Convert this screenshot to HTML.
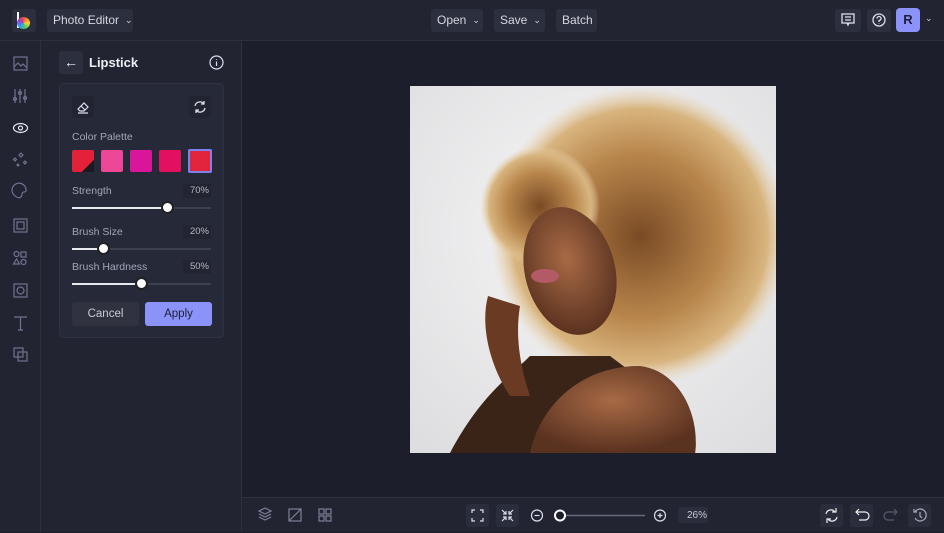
<!DOCTYPE html>
<html><head><style>
*{box-sizing:border-box;margin:0;padding:0}
body{width:944px;height:532px;background:#1c1e2b;font-family:"Liberation Sans",sans-serif;color:#d8dae4;position:relative;overflow:hidden;font-size:12px}
.top{position:absolute;left:0;top:0;width:944px;height:41px;background:#222432;border-bottom:1px solid #2e3040}
.btn{position:absolute;top:9px;height:23px;background:#2c2f3e;border-radius:3px;color:#d4d6e0;font-size:12px;line-height:23px;padding:0 6px;white-space:nowrap}
.btn i{font-style:normal;font-size:9px;margin-left:6px;position:relative;top:-1px}
.side{position:absolute;left:0;top:41px;width:41px;height:491px;background:#222432;border-right:1px solid #2e3040}
.panel{position:absolute;left:41px;top:41px;width:201px;height:491px;background:#222432;border-right:1px solid #2e3040}
.card{position:absolute;left:18px;top:42px;width:165px;height:255px;border:1px solid #2f3242;border-radius:5px;background:#262938}
.lbl{position:absolute;left:12px;color:#a3a6b8;font-size:10.5px}
.val{position:absolute;right:12px;width:28px;height:14px;background:#222432;border-radius:2px;color:#b6b8c6;font-size:9.5px;text-align:right;padding-right:2px;line-height:14px}
.track{position:absolute;left:12px;width:139px;height:2px;background:#3d4050}
.fill{position:absolute;left:0;top:0;height:2px;background:#e8e9ef}
.knob{position:absolute;top:-6px;width:13px;height:13px;border-radius:50%;background:#fff;border:2px solid #222}
.sw{position:absolute;top:66px;width:22px;height:22px;border-radius:2px}
.bot{position:absolute;left:242px;top:497px;width:702px;height:35px;background:#222432;border-top:1px solid #2e3040}
.ib{position:absolute;width:22px;height:22px;border-radius:3px;background:#2a2d3c}
svg.ic{position:absolute}
</style></head><body>
<div class="top">
 <div style="position:absolute;left:12px;top:9px;width:24px;height:23px;background:#2c2f3e;border-radius:3px"></div>
 <div style="position:absolute;left:17px;top:12px;width:2px;height:16px;background:#fff"></div>
 <div style="position:absolute;left:17px;top:17px;width:13px;height:12px;border-radius:50%;background:conic-gradient(#e53 0,#fc3 25%,#4c6 45%,#39f 65%,#a3c 85%,#e53)"></div>
 <div class="btn" style="left:47px;width:86px">Photo Editor<i>&#8964;</i></div>
 <div class="btn" style="left:431px;width:52px">Open<i>&#8964;</i></div>
 <div class="btn" style="left:494px;width:51px">Save<i>&#8964;</i></div>
 <div class="btn" style="left:556px;width:41px">Batch</div>
 <div class="btn" style="left:835px;width:26px"></div>
 <svg class="ic" style="left:841px;top:13px" width="14" height="14" viewBox="0 0 14 14" fill="none" stroke="#dde" stroke-width="1.3"><rect x="1" y="1" width="12" height="9"/><path d="M4 4h6M4 7h6M6 10l1 2 1-2"/></svg>
 <div class="btn" style="left:867px;width:24px"></div>
 <svg class="ic" style="left:872px;top:13px" width="14" height="14" viewBox="0 0 14 14" fill="none" stroke="#dde" stroke-width="1.3"><circle cx="7" cy="7" r="6"/><path d="M5 5.5a2 2 0 1 1 2 2v1.5M7 10.5v.5"/></svg>
 <div style="position:absolute;left:896px;top:8px;width:24px;height:24px;border-radius:4px;background:#8b93f8;color:#1c1e3a;font-weight:bold;font-size:13px;text-align:center;line-height:24px">R</div>
 <div style="position:absolute;left:925px;top:13px;color:#ccd;font-size:9px">&#8964;</div>
</div>
<div class="side">
 <svg width="41" height="330" viewBox="0 0 41 330" fill="none" stroke="#6f7390" stroke-width="1.2" style="position:absolute;left:0;top:0">
  <rect x="14" y="16" width="13" height="13"/><path d="M14 26l4-4 3 3 2-2 4 4"/>
  <path d="M15 48v14M20 48v14M25 48v14"/><circle cx="15" cy="58" r="1.5"/><circle cx="20" cy="52" r="1.5"/><circle cx="25" cy="57" r="1.5"/>
  <ellipse cx="20.5" cy="87" rx="7" ry="4.5" stroke="#e8e9f0"/><circle cx="20.5" cy="87" r="2" stroke="#e8e9f0"/>
  <path d="M21 112l2 2-2 2-2-2zM15 117l1.5 1.5-1.5 1.5-1.5-1.5zM25 120l1.5 1.5-1.5 1.5-1.5-1.5zM18 123l1 1-1 1-1-1z"/>
  <path d="M14 154a7 7 0 1 1 12-4c-1 2-4 0-4 3s-3 6-8 1z"/>
  <rect x="14" y="178" width="13" height="13"/><rect x="17" y="181" width="7" height="7"/>
  <circle cx="16.5" cy="213" r="2.5"/><rect x="21" y="211" width="5" height="5"/><path d="M16.5 218l3 5h-6z"/><circle cx="23.5" cy="221" r="2.5"/>
  <rect x="14" y="243" width="13" height="13"/><circle cx="20.5" cy="249.5" r="3.5"/>
  <path d="M14 276h13M20.5 276v13M18 289h5"/>
  <rect x="14" y="307" width="9" height="9"/><rect x="18" y="311" width="9" height="9"/>
 </svg>
</div>
<div class="panel">
 <div style="position:absolute;left:18px;top:10px;width:24px;height:23px;background:#2c2f3e;border-radius:3px;color:#eee;text-align:center;line-height:22px;font-size:14px">←</div>
 <div style="position:absolute;left:48px;top:14px;font-weight:bold;font-size:13px;color:#eceef4">Lipstick</div>
 <svg class="ic" style="left:168px;top:14px" width="15" height="15" viewBox="0 0 15 15" fill="none" stroke="#dde" stroke-width="1.2"><circle cx="7.5" cy="7.5" r="6.5"/><path d="M7.5 6.5v4.5M7.5 4v.8"/></svg>
 <div class="card">
  <div class="ib" style="left:12px;top:12px;background:#222432"></div>
  <svg class="ic" style="left:16px;top:16px" width="14" height="14" viewBox="0 0 14 14" fill="none" stroke="#dde" stroke-width="1.2"><path d="M2 9l6-6 4 4-4 4H4zM5 6l4 4M2 13h10"/></svg>
  <div class="ib" style="left:129px;top:12px;background:#222432"></div>
  <svg class="ic" style="left:133px;top:16px" width="14" height="14" viewBox="0 0 14 14" fill="none" stroke="#dde" stroke-width="1.3"><path d="M2 6a5 5 0 0 1 9-2M12 8a5 5 0 0 1-9 2M11 1v3H8M3 13v-3h3"/></svg>
  <div class="lbl" style="top:47px">Color Palette</div>
  <div class="sw" style="left:12px;background:linear-gradient(135deg,#e3223a 72%,#1a1a22 72%)"></div>
  <div class="sw" style="left:41px;background:#ef4797"></div>
  <div class="sw" style="left:70px;background:#d9169a"></div>
  <div class="sw" style="left:99px;background:#e2105e"></div>
  <div class="sw" style="left:128px;width:24px;height:24px;top:65px;background:#e2253c;border:2px solid #7b82f0"></div>
  <div class="lbl" style="top:101px">Strength</div><div class="val" style="top:100px">70%</div>
  <div class="track" style="top:123px"><div class="fill" style="width:95px"></div><div class="knob" style="left:89px"></div></div>
  <div class="lbl" style="top:142px">Brush Size</div><div class="val" style="top:141px">20%</div>
  <div class="track" style="top:164px"><div class="fill" style="width:31px"></div><div class="knob" style="left:25px"></div></div>
  <div class="lbl" style="top:177px">Brush Hardness</div><div class="val" style="top:176px">50%</div>
  <div class="track" style="top:199px"><div class="fill" style="width:70px"></div><div class="knob" style="left:63px"></div></div>
  <div style="position:absolute;left:12px;top:218px;width:67px;height:24px;background:#30333f;border-radius:3px;text-align:center;line-height:24px;color:#c8cad4;font-size:11.5px">Cancel</div>
  <div style="position:absolute;left:85px;top:218px;width:67px;height:24px;background:#8b93f8;border-radius:3px;text-align:center;line-height:24px;color:#1c1e3a;font-size:11.5px">Apply</div>
 </div>
</div>
<svg style="position:absolute;left:410px;top:86px" width="366" height="367" viewBox="0 0 366 367">
 <defs>
  <radialGradient id="bg" cx="0.5" cy="0.4" r="0.8"><stop offset="0" stop-color="#f6f6f7"/><stop offset="1" stop-color="#dcdcde"/></radialGradient>
  <radialGradient id="hair" cx="0.5" cy="0.5" r="0.5"><stop offset="0" stop-color="#7a4a24"/><stop offset="0.55" stop-color="#b8864c"/><stop offset="0.85" stop-color="#d8b47e"/><stop offset="1" stop-color="#e8d2ae" stop-opacity="0"/></radialGradient>
  <radialGradient id="skin" cx="0.5" cy="0.4" r="0.6"><stop offset="0" stop-color="#a86a45"/><stop offset="1" stop-color="#5a3220"/></radialGradient>
 </defs>
 <rect width="366" height="367" fill="url(#bg)"/>
 <ellipse cx="230" cy="150" rx="150" ry="150" fill="url(#hair)"/>
 <ellipse cx="130" cy="120" rx="60" ry="60" fill="url(#hair)"/>
 <path d="M40 367 C70 310 100 290 120 270 L200 270 L240 300 C270 310 290 340 285 367Z" fill="#3a2418"/>
 <path d="M120 367 C130 320 170 280 230 280 C270 285 290 330 285 367Z" fill="url(#skin)"/>
 <ellipse cx="160" cy="185" rx="45" ry="65" transform="rotate(-15 160 185)" fill="url(#skin)"/>
 <path d="M78 210 C70 240 80 280 100 310 L120 310 C110 280 105 250 110 220Z" fill="#6a3a22"/>
 <ellipse cx="135" cy="190" rx="14" ry="7" fill="#b25a66"/>
</svg>
<div class="bot">
 <svg width="702" height="35" viewBox="0 0 702 35" fill="none" stroke="#7d8196" stroke-width="1.2" style="position:absolute;left:0;top:0">
  <path d="M17 13l6-3 6 3-6 3zM17 16l6 3 6-3M17 19l6 3 6-3"/>
  <rect x="47" y="11" width="12" height="12"/><path d="M47 23l12-12"/>
  <rect x="77" y="11" width="5" height="5"/><rect x="84" y="11" width="5" height="5"/><rect x="77" y="18" width="5" height="5"/><rect x="84" y="18" width="5" height="5"/>
  <rect x="224" y="6" width="23" height="23" rx="3" fill="#2a2d3c" stroke="none"/>
  <path d="M230 15v-3h3M238 12h3v3M241 20v3h-3M233 23h-3v-3" stroke="#dde"/>
  <rect x="254" y="6" width="23" height="23" rx="3" fill="#2a2d3c" stroke="none"/>
  <path d="M260 12l4 4M264 13v3h-3M271 12l-4 4M267 13v3h3M260 23l4-4M264 22v-3h-3M271 23l-4-4M267 22v-3h3" stroke="#dde"/>
  <circle cx="295" cy="17.5" r="5.5" stroke="#dde"/><path d="M292.5 17.5h5" stroke="#dde"/>
  <path d="M322 17.5h81" stroke="#666a7c" stroke-width="1.5"/><path d="M313 17.5h6" stroke="#dde"/>
  <circle cx="318" cy="17.5" r="5" fill="#1c1e2b" stroke="#fff" stroke-width="2"/>
  <circle cx="418" cy="17.5" r="5.5" stroke="#dde"/><path d="M415.5 17.5h5M418 15v5" stroke="#dde"/>
  <rect x="436" y="9" width="30" height="16" rx="2" fill="#2a2d3c" stroke="none"/>
  <rect x="578" y="6" width="23" height="23" rx="3" fill="#2a2d3c" stroke="none"/>
  <path d="M584 16a5 5 0 0 1 9-2M595 19a5 5 0 0 1-9 2M594 10v4h-4M585 25v-4h4" stroke="#eee"/>
  <rect x="608" y="6" width="23" height="23" rx="3" fill="#2a2d3c" stroke="none"/>
  <path d="M614 14h9a4 4 0 0 1 0 8h-6M617 11l-3 3 3 3" stroke="#eee"/>
  <path d="M655 14h-9a4 4 0 0 0 0 8h6M652 11l3 3-3 3" stroke="#555a6c"/>
  <rect x="666" y="6" width="23" height="23" rx="3" fill="#2a2d3c" stroke="none"/>
  <path d="M673 14a6 6 0 1 1 0 6M672 11v3h3M678 14v4l2 2" stroke="#aab"/>
 </svg>
 <div style="position:absolute;left:445px;top:12px;font-size:10px;color:#c8cad4">26%</div>
</div>
</body></html>
